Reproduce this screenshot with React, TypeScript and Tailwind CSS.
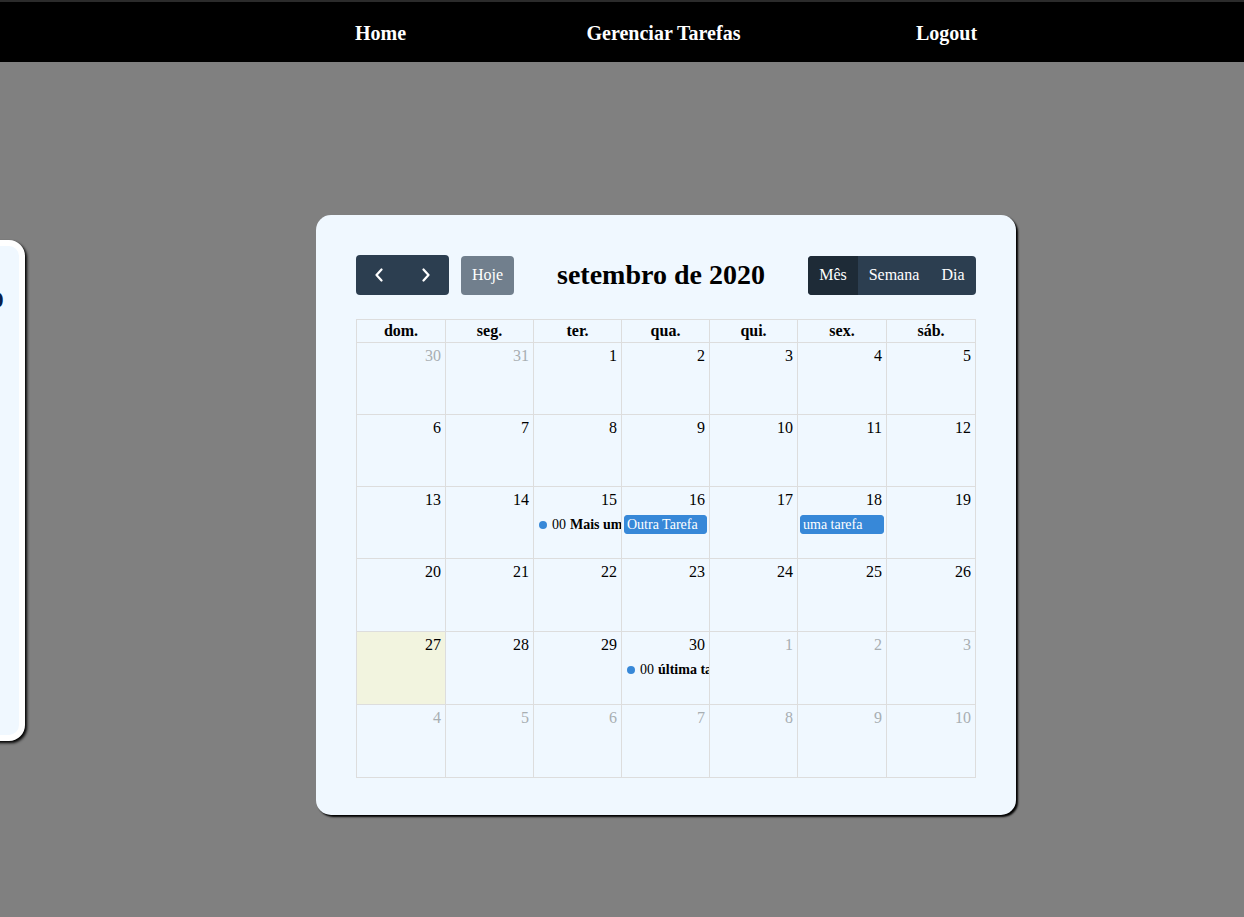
import type { ReactNode } from "react";

type Day = { n: number; muted?: boolean; today?: boolean; events?: Ev[] };
type Ev = { kind: "block" | "dot"; title: string };

const WEEKDAYS = ["dom.", "seg.", "ter.", "qua.", "qui.", "sex.", "sáb."];
const COLS = "grid-cols-[89px_88px_88px_88px_88px_89px_89px]";
const ROW_H = ["h-[72px]", "h-[72px]", "h-[72px]", "h-[73px]", "h-[73px]", "h-[73px]"];

const WEEKS: Day[][] = [
  [{ n: 30, muted: true }, { n: 31, muted: true }, { n: 1 }, { n: 2 }, { n: 3 }, { n: 4 }, { n: 5 }],
  [{ n: 6 }, { n: 7 }, { n: 8 }, { n: 9 }, { n: 10 }, { n: 11 }, { n: 12 }],
  [
    { n: 13 },
    { n: 14 },
    { n: 15, events: [{ kind: "dot", title: "Mais um" }] },
    { n: 16, events: [{ kind: "block", title: "Outra Tarefa" }] },
    { n: 17 },
    { n: 18, events: [{ kind: "block", title: "uma tarefa" }] },
    { n: 19 },
  ],
  [{ n: 20 }, { n: 21 }, { n: 22 }, { n: 23 }, { n: 24 }, { n: 25 }, { n: 26 }],
  [
    { n: 27, today: true },
    { n: 28 },
    { n: 29 },
    { n: 30, events: [{ kind: "dot", title: "última tarefa" }] },
    { n: 1, muted: true },
    { n: 2, muted: true },
    { n: 3, muted: true },
  ],
  [4, 5, 6, 7, 8, 9, 10].map((n) => ({ n, muted: true })),
];

function Chevron({ dir }: { dir: "left" | "right" }) {
  return (
    <svg width="10" height="14" viewBox="0 0 10 14" fill="none">
      <polyline
        points={dir === "left" ? "7.5,1.5 2.5,7 7.5,12.5" : "2.5,1.5 7.5,7 2.5,12.5"}
        stroke="white"
        strokeWidth="2.2"
        strokeLinecap="round"
        strokeLinejoin="round"
      />
    </svg>
  );
}

function EventItem({ ev }: { ev: Ev }) {
  if (ev.kind === "block") {
    return (
      <div className="mx-[2px] h-[19px] rounded-[3px] border border-[#3788d8] bg-[#3788d8] pl-[2px] text-[14px] leading-[17px] text-white whitespace-nowrap overflow-hidden">
        {ev.title}
      </div>
    );
  }
  return (
    <div className="flex h-[19px] items-center whitespace-nowrap overflow-hidden pl-[5px] text-[14px]">
      <span className="mr-[5px] h-[8px] w-[8px] shrink-0 rounded-full bg-[#3788d8]" />
      <span>00</span>
      <span className="ml-[4px] font-bold">{ev.title}</span>
    </div>
  );
}

function NavLink({ children }: { children: ReactNode }) {
  return <div className="flex-1 text-center">{children}</div>;
}

export default function App() {
  return (
    <div className="h-[917px] overflow-hidden bg-[#808080] font-['Liberation_Serif',serif] text-black">
      <nav className="flex h-[62px] items-center border-t-2 border-[#2b2b2b] bg-black pt-[2px]">
        <div className="ml-[239px] flex w-[849px] text-[20px] font-bold text-white">
          <NavLink>Home</NavLink>
          <NavLink>Gerenciar Tarefas</NavLink>
          <NavLink>Logout</NavLink>
        </div>
      </nav>

      <div className="flex items-start">
        <aside className="-ml-[275px] mt-[178px] h-[501px] w-[300px] shrink-0 rounded-[16px] border-[6px] border-white bg-[#f0f8ff] shadow-[2px_2px_3px_#000]">
          <h2 className="mt-[31px] pr-[15px] text-right text-[34px] font-bold leading-[40px] text-[#0b1f4d] whitespace-nowrap overflow-hidden">
            Resumo
          </h2>
        </aside>

        <main className="ml-[291px] mt-[153px] h-[600px] w-[700px] shrink-0 rounded-[15px] bg-[#f0f8ff] px-[40px] pt-[40px] shadow-[2px_2px_2px_#000]">
          <div className="flex h-[40px] items-center justify-between">
            <div className="flex items-center">
              <div className="flex h-[40px] w-[93px] overflow-hidden rounded-[4px] bg-[#2c3e50]">
                <button className="flex flex-1 items-center justify-center">
                  <Chevron dir="left" />
                </button>
                <button className="flex flex-1 items-center justify-center">
                  <Chevron dir="right" />
                </button>
              </div>
              <button className="ml-[12px] h-[39px] w-[53px] rounded-[4px] bg-[#717f8d] text-[16px] text-white">
                Hoje
              </button>
            </div>
            <h1 className="text-[28px] font-bold leading-none">setembro de 2020</h1>
            <div className="flex h-[39px] overflow-hidden rounded-[4px] bg-[#2c3e50] text-[16px] text-white">
              <button className="w-[50px] bg-[#1e2b37]">Mês</button>
              <button className="w-[72px]">Semana</button>
              <button className="w-[46px]">Dia</button>
            </div>
          </div>

          <div className={`mt-[24px] grid w-[620px] ${COLS} border-l border-t border-[#ddd]`}>
            {WEEKDAYS.map((d) => (
              <div
                key={d}
                className="flex h-[23px] items-center justify-center border-b border-r border-[#ddd] text-[16px] font-bold"
              >
                {d}
              </div>
            ))}
            {WEEKS.map((week, wi) =>
              week.map((day, di) => (
                <div
                  key={`${wi}-${di}`}
                  className={`${ROW_H[wi]} min-w-0 overflow-hidden border-b border-r border-[#ddd] ${
                    day.today ? "bg-[#f2f4df]" : ""
                  }`}
                >
                  <div
                    className={`pr-[4px] pt-[3px] text-right text-[16px] leading-[20px] ${
                      day.muted ? "text-[#a8aeb2]" : "text-black"
                    }`}
                  >
                    {day.n}
                  </div>
                  {day.events ? (
                    <div className="mt-[5px]">
                      {day.events.map((ev) => (
                        <EventItem key={ev.title} ev={ev} />
                      ))}
                    </div>
                  ) : null}
                </div>
              )),
            )}
          </div>
        </main>
      </div>
    </div>
  );
}
